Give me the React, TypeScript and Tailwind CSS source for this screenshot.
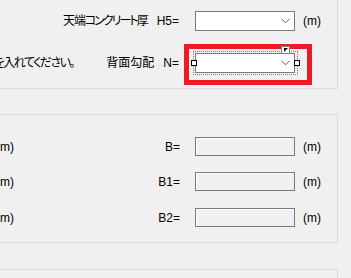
import React from "react";

const font = "font-['Liberation_Sans','Noto_Sans_CJK_JP',sans-serif] [font-feature-settings:'palt']";

function Chevron() {
  return (
    <svg width="9" height="6" viewBox="0 0 9 6" className="absolute right-[4px] top-1/2 -translate-y-1/2">
      <path d="M0.5 0.8 L4.5 4.8 L8.5 0.8" fill="none" stroke="#606060" strokeWidth="1" />
    </svg>
  );
}

function Combo() {
  return (
    <div className="relative w-[100px] h-[20px] bg-white border border-[#7a7a7a] shrink-0">
      <Chevron />
    </div>
  );
}

function TextBox() {
  return (
    <div className="w-[100px] h-[19px] bg-[#f0f0f0] border border-[#7a7a7a] shadow-[inset_1px_1px_0_#ffffff] shrink-0" />
  );
}

function Row({ label }: { label: string }) {
  return (
    <div className="flex items-center h-[19px] text-[12px] text-black whitespace-nowrap">
      <div className="w-[14px] overflow-hidden flex justify-end">
        <span className="shrink-0">(m)</span>
      </div>
      <div className="w-[166px] flex justify-end">
        <span>{label}</span>
      </div>
      <div className="ml-[15px]">
        <TextBox />
      </div>
      <span className="ml-[8px]">(m)</span>
    </div>
  );
}

export default function App() {
  return (
    <div className={`w-[351px] h-[278px] bg-[#f0f0f0] overflow-hidden ${font}`}>
      <div className="w-[338px] h-[89px] border-r border-b border-[#dcdcdc] pt-[11px]">
        <div className="flex items-center h-[20px] text-[12px] text-black whitespace-nowrap">
          <div className="w-[179px] flex justify-end items-center gap-[9px]">
            <span className="tracking-[-1px]">
              天端<span className="tracking-[-2px]">コンクリート</span>厚
            </span>
            <span>H5=</span>
          </div>
          <div className="ml-[16px]">
            <Combo />
          </div>
          <span className="ml-[8px]">(m)</span>
        </div>
        <div className="flex mt-[13px] h-[41px] text-[12px] text-black whitespace-nowrap">
          <div className="w-[74px] overflow-hidden flex justify-end items-center pb-[4px]">
            <span className="shrink-0 tracking-[-1.5px]">数値を入れてください。</span>
          </div>
          <div className="w-[105px] flex justify-end items-center gap-[9px] pb-[4px]">
            <span>背面勾配</span>
            <span>N=</span>
          </div>
          <div className="ml-[5px] relative w-[128px] h-[41px] border-[5px] border-[#ed1c24] pt-[4px] pl-[6px]">
            <Combo />
            <div className="absolute left-[4px] top-[2px] w-[105px] h-[24px] border border-dotted border-[#808080]" />
            <div className="absolute left-[2px] top-[11px] w-[6px] h-[6px] bg-white border border-black" />
            <div className="absolute left-[105px] top-[11px] w-[6px] h-[6px] bg-white border border-black" />
            <div className="absolute left-[92px] top-[-3px] w-[9px] h-[8px] bg-white border border-[#808080]">
              <svg width="7" height="6" viewBox="0 0 7 6" className="absolute left-[1px] top-[0px]">
                <path d="M1 1 H5 L1 5 Z" fill="#000" />
              </svg>
            </div>
          </div>
        </div>
      </div>
      <div className="mt-[25px] w-[338px] h-[129px] border-t border-r border-b border-[#dcdcdc] pt-[22px]">
        <Row label="B=" />
        <div className="mt-[16px]">
          <Row label="B1=" />
        </div>
        <div className="mt-[17px]">
          <Row label="B2=" />
        </div>
      </div>
      <div className="mt-[26px] w-[338px] h-[20px] border-t border-r border-[#dcdcdc]" />
    </div>
  );
}
